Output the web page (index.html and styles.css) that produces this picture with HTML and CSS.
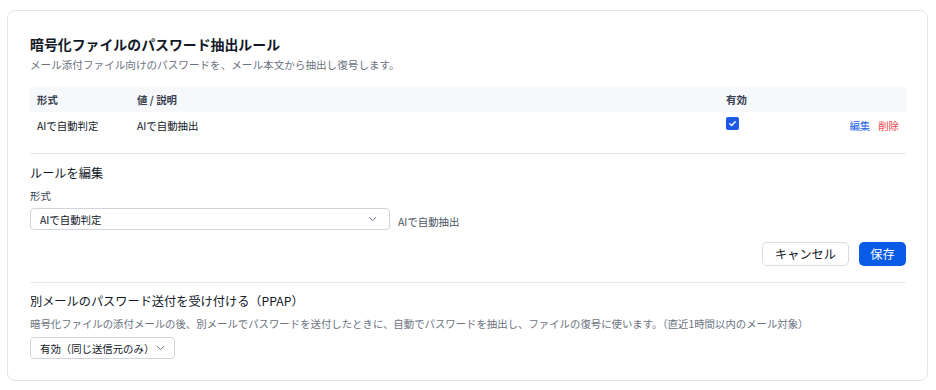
FILE: index.html
```html
<!DOCTYPE html>
<html lang="ja">
<head>
    <meta charset="UTF-8">
    <meta name="viewport" content="width=device-width, initial-scale=1.0">
    <title>パスワード抽出ルール</title>
    <link rel="stylesheet" href="styles.css">
</head>
<body>

    <div class="card">
        <h2 class="title">暗号化ファイルのパスワード抽出ルール</h2>
        <p class="subtitle">メール添付ファイル向けのパスワードを、メール本文から抽出し復号します。</p>

        <div class="rules">
            <div class="rules-row rules-head">
                <div>形式</div>
                <div>値 / 説明</div>
                <div>有効</div>
                <div></div>
            </div>
            <div class="rules-row">
                <div>AIで自動判定</div>
                <div>AIで自動抽出</div>
                <div>
                    <span class="check">
                        <svg width="9" height="9" viewBox="0 0 10 10"><path d="M2 5.2 L4.1 7.2 L8 3" fill="none" stroke="#fff" stroke-width="1.6" stroke-linecap="round" stroke-linejoin="round"/></svg>
                    </span>
                </div>
                <div class="actions">
                    <a href="#" class="link-edit">編集</a>
                    <a href="#" class="link-delete">削除</a>
                </div>
            </div>
        </div>

        <div class="section">
            <h3 class="section-title">ルールを編集</h3>
            <label class="field-label">形式</label>
            <div class="field-row">
                <div class="select select-wide">
                    <span>AIで自動判定</span>
                    <svg class="chevron" width="9" height="6" viewBox="0 0 9 6"><path d="M1 1.2 L4.5 4.6 L8 1.2" fill="none" stroke="#6b7280" stroke-width="1"/></svg>
                </div>
                <span class="hint">AIで自動抽出</span>
            </div>
            <div class="buttons">
                <button class="btn btn-cancel">キャンセル</button>
                <button class="btn btn-save">保存</button>
            </div>
        </div>

        <div class="section">
            <h3 class="section-title">別メールのパスワード送付を受け付ける（PPAP）</h3>
            <p class="desc">暗号化ファイルの添付メールの後、別メールでパスワードを送付したときに、自動でパスワードを抽出し、ファイルの復号に使います。（直近1時間以内のメール対象）</p>
            <div class="select select-small">
                <span>有効（同じ送信元のみ）</span>
                <svg class="chevron" width="9" height="6" viewBox="0 0 9 6"><path d="M1 1.2 L4.5 4.6 L8 1.2" fill="none" stroke="#6b7280" stroke-width="1"/></svg>
            </div>
        </div>
    </div>

</body>
</html>
```

FILE: styles.css
```css
body {
    font-family: "Noto Sans CJK JP", sans-serif;
    background-color: #ffffff;
    color: #1f2937;
    margin: 0;
    padding: 10px 8px 8px 7px;
}
.card {
    background: white;
    border: 1px solid #e3e5e9;
    border-radius: 8px;
    padding: 23px 21px 21px 22px;
}
.title {
    font-size: 13.9px;
    line-height: 20px;
    font-weight: bold;
    color: #111827;
    margin: 0;
}
.subtitle {
    font-size: 10.6px;
    line-height: 16px;
    color: #6b7280;
    margin: 3px 0 0 0;
}

/* Rules table */
.rules {
    margin-top: 14px;
}
.rules-row {
    display: grid;
    grid-template-columns: 100px 1fr 122px 65px;
    align-items: center;
    height: 26px;
    font-size: 10.4px;
    color: #111827;
}
.rules-row > div {
    padding: 0 7px;
}
.rules-head {
    height: 25px;
    background-color: #f7f8fa;
    font-weight: bold;
    color: #374151;
}
.check {
    display: flex;
    align-items: center;
    justify-content: center;
    width: 13px;
    height: 13px;
    background-color: #1d5ae6;
    border-radius: 2px;
    margin-top: -3px;
}
.actions {
    display: flex;
    justify-content: flex-end;
    gap: 8px;
}
.actions a {
    text-decoration: none;
}
.link-edit {
    color: #2563eb;
}
.link-delete {
    color: #ef4444;
}

/* Sections */
.section {
    border-top: 1px solid #e5e7eb;
    margin-top: 15px;
    padding-top: 10px;
}
.section + .section {
    margin-top: 16px;
    padding-top: 9px;
}
.section-title {
    font-size: 12.2px;
    line-height: 18px;
    font-weight: normal;
    color: #111827;
    margin: 0;
}
.field-label {
    display: block;
    font-size: 10.4px;
    line-height: 16px;
    color: #374151;
    margin-top: 6px;
}
.field-row {
    display: flex;
    align-items: center;
    gap: 8px;
    margin-top: 4px;
}
.select {
    display: flex;
    align-items: center;
    justify-content: space-between;
    box-sizing: border-box;
    height: 22px;
    padding: 0 9px 0 9px;
    border: 1px solid #d1d5db;
    border-radius: 4px;
    font-size: 10.4px;
    color: #111827;
    background: white;
}
.select-wide {
    width: 360px;
    padding-right: 12px;
}
.select-small {
    width: 145px;
    margin-top: 5px;
}
.chevron {
    flex-shrink: 0;
}
.hint {
    font-size: 10.4px;
    color: #4b5563;
    margin-top: 5px;
}
.buttons {
    display: flex;
    justify-content: flex-end;
    gap: 10px;
    margin-top: 12px;
}
.btn {
    font-family: inherit;
    font-size: 12.2px;
    box-sizing: border-box;
    height: 24px;
    border-radius: 5px;
    cursor: pointer;
    padding: 0;
    white-space: nowrap;
}
.btn-cancel {
    width: 87px;
    background: white;
    color: #111827;
    border: 1px solid #d9dce2;
}
.btn-save {
    width: 47px;
    background-color: #0a5ae8;
    color: white;
    border: none;
}
.desc {
    font-size: 10.4px;
    line-height: 16px;
    color: #6b7280;
    margin: 6px 0 0 0;
}
```
